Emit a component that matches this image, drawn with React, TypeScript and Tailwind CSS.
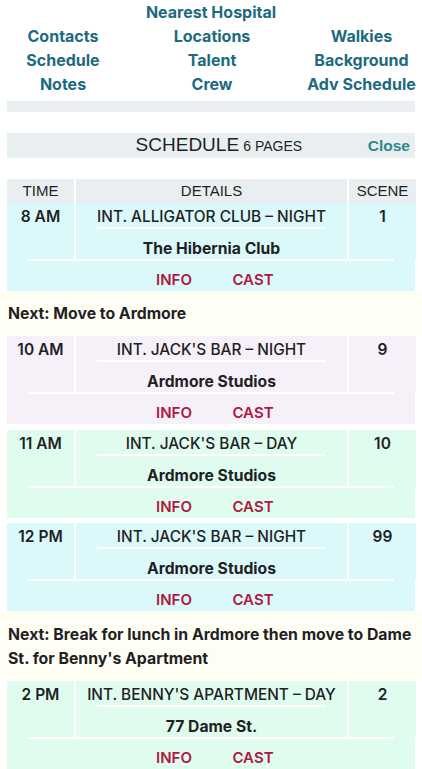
import React from "react";

type Item =
  | { kind: "scene"; time: string; title: string; loc: string; scene: string; bg: string; gap: string }
  | { kind: "next"; text: string; pad: string };

const items: Item[] = [
  { kind: "scene", time: "8 AM", title: "INT. ALLIGATOR CLUB – NIGHT", loc: "The Hibernia Club", scene: "1", bg: "bg-[#dbf9fa]", gap: "mt-0" },
  { kind: "next", text: "Next: Move to Ardmore", pad: "pt-[11px]" },
  { kind: "scene", time: "10 AM", title: "INT. JACK'S BAR – NIGHT", loc: "Ardmore Studios", scene: "9", bg: "bg-[#f6f0f9]", gap: "mt-[1px]" },
  { kind: "scene", time: "11 AM", title: "INT. JACK'S BAR – DAY", loc: "Ardmore Studios", scene: "10", bg: "bg-[#e0fcee]", gap: "mt-[6px]" },
  { kind: "scene", time: "12 PM", title: "INT. JACK'S BAR – NIGHT", loc: "Ardmore Studios", scene: "99", bg: "bg-[#dbf9fa]", gap: "mt-[5px]" },
  { kind: "next", text: "Next: Break for lunch in Ardmore then move to Dame St. for Benny's Apartment", pad: "pt-[12px]" },
  { kind: "scene", time: "2 PM", title: "INT. BENNY'S APARTMENT – DAY", loc: "77 Dame St.", scene: "2", bg: "bg-[#e0fcee]", gap: "mt-[1px]" },
];

const nav = [
  ["Contacts", "Locations", "Walkies"],
  ["Schedule", "Talent", "Background"],
  ["Notes", "Crew", "Adv Schedule"],
];

function SceneRow({ item }: { item: Extract<Item, { kind: "scene" }> }) {
  return (
    <div className={`${item.gap} mx-[7px]`}>
      <div className="grid w-[409px] grid-cols-[67px_271px_67px] gap-x-[2px] bg-white">
        <div className={`${item.bg} pt-[4px] text-center text-[15.5px] leading-[20px] font-semibold`}>{item.time}</div>
        <div className={`${item.bg} text-center`}>
          <div className="pt-[4px] text-[15.4px] leading-[20px] font-medium">{item.title}</div>
          <div className="mx-[21px] h-[2px] bg-white" />
          <div className="pt-[10px] text-[15.7px] leading-[20px] font-bold">{item.loc}</div>
        </div>
        <div className={`${item.bg} pt-[4px] text-center text-[15.5px] leading-[20px] font-semibold`}>{item.scene}</div>
      </div>
      <div className={`${item.bg} h-[32px]`}>
        <div className="ml-[22px] mr-[21px] h-[2px] bg-white" />
        <div className="ml-[5px] flex justify-center gap-[9px] pt-[8px] leading-[22px] font-semibold text-[#b0183f]">
          <span className="w-[70px] text-center">INFO</span>
          <span className="w-[70px] text-center">CAST</span>
        </div>
      </div>
    </div>
  );
}

export default function App() {
  return (
    <div className="min-h-screen overflow-hidden bg-white font-['Inter',sans-serif] text-[15px] text-[#1f1f25]">
      <nav className="text-[16px] leading-6 font-bold text-[#1d6a7e]">
        <div className="text-center">Nearest Hospital</div>
        {nav.map((row) => (
          <div key={row[0]} className="mx-[7px] grid grid-cols-[112px_186px_113px] text-center">
            {row.map((n) => (
              <span key={n}>{n}</span>
            ))}
          </div>
        ))}
      </nav>
      <div className="mx-[7px] mt-[5px] h-[11px] bg-[#e9eff1]" />

      <div className="mx-[7px] mt-[21px] flex h-[25px] items-center bg-[#e9eff1] font-['Liberation_Sans',sans-serif]">
        <div className="flex-1 pl-[63px] text-center">
          <span className="text-[19px]">SCHEDULE</span> <span className="text-[14px]">6 PAGES</span>
        </div>
        <span className="pr-[5px] text-[15.5px] font-bold text-[#2a8a8c]">Close</span>
      </div>

      <div className="mx-[7px] mt-[21px] grid w-[409px] grid-cols-[67px_271px_67px] gap-x-[2px] font-['Liberation_Sans',sans-serif] leading-6">
        <div className="bg-[#e9eff1] text-center">TIME</div>
        <div className="bg-[#e9eff1] text-center">DETAILS</div>
        <div className="bg-[#e9eff1] text-center">SCENE</div>
      </div>

      {items.map((item, i) =>
        item.kind === "scene" ? (
          <SceneRow key={i} item={item} />
        ) : (
          <div key={i} className={`${item.pad} bg-[#fffef4] pb-[9px] pl-[8px] pr-[4px] text-[15.8px] leading-6 font-bold`}>
            {item.text}
          </div>
        )
      )}
    </div>
  );
}
